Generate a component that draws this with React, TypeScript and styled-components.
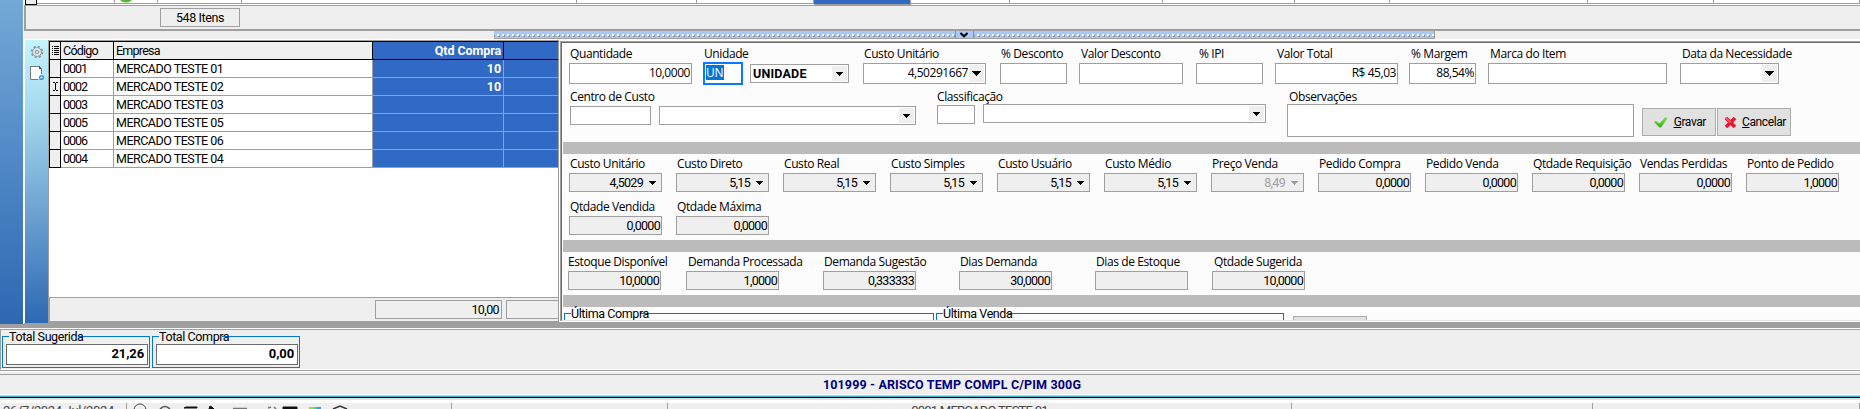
import React from 'react';
import styled, { createGlobalStyle } from 'styled-components';

const GlobalStyle = createGlobalStyle`
  * {
    box-sizing: border-box;
  }
  body {
    margin: 0;
    overflow: hidden;
    background: #efefef;
  }
`;
const bitmapFont = "Roboto, 'Liberation Sans', sans-serif";
const labelFont = "'Open Sans', 'Noto Sans', sans-serif";

const Screen = styled.div`
  display: flex;
  flex-direction: column;
  width: 1860px;
  height: 409px;
  overflow: hidden;
  background: #efefef;
  color: #000;
  font-family: ${bitmapFont};
  font-size: 12px;
  letter-spacing: -0.35px;
  white-space: nowrap;
`;
const Main = styled.div`
  display: flex;
  height: 328px;
  flex-shrink: 0;
  background: #9f9f9f;
`;
const Rail = styled.div`
  width: 24px;
  height: 324px;
  border-right: 1px solid #fff;
  background: linear-gradient(#72a9d7, #2d68b3);
`;
const Content = styled.div`
  width: 1836px;
  display: flex;
  flex-direction: column;
`;

/* items grid, only its last line is visible */
const ItemsEdge = styled.div`
  display: flex;
  height: 6px;
  padding-left: 1px;
  background: #fff;
  border-bottom: 1px solid #9f9f9f;
`;
const ItemsIndicator = styled.div`
  width: 12px;
  height: 5px;
  border: solid #000;
  border-width: 0 1px 1px 1px;
  background: #efefef;
`;
const ItemsCell = styled.div<{ w: number; selected?: boolean }>`
  width: ${(p) => p.w}px;
  height: ${(p) => (p.selected ? 5 : 4)}px;
  border-right: 1px solid #9f9f9f;
  border-bottom: 1px solid #9f9f9f;
  background: ${(p) => (p.selected ? '#316ac5' : '#fff')};
  display: flex;
  padding-left: 5px;
`;
const ItemsFooter = styled.div`
  height: 25px;
  border-left: 2px solid #9f9f9f;
  border-bottom: 2px solid #9f9f9f;
  background: #efefef;
  padding: 2px 0 0 134px;
`;
const ItemsCount = styled.div`
  width: 80px;
  height: 19px;
  border: 1px solid #9f9f9f;
  line-height: 18px;
  text-align: center;
  font-size: 12.5px;
  letter-spacing: -0.4px;
`;
const SplitterLine = styled.div`
  display: flex;
  height: 9px;
  padding-left: 470px;
  background: #efefef;
  border-bottom: 1px solid #fff;
`;
const Dots = styled.div`
  flex: 1;
  background: repeating-linear-gradient(90deg, transparent 0 3px, #fff 3px 5px) 0 3px / 100% 2px
      no-repeat,
    repeating-linear-gradient(90deg, #8e9296 0 1px, transparent 1px 4px, #8e9296 4px 5px) 0 4px /
      100% 2px no-repeat,
    #a9c9f3;
`;
const Splitter = styled.div`
  display: flex;
  width: 941px;
  height: 8px;
  border: solid #9f9f9f;
  border-width: 0 1px 1px 0;
  background: #a9c9f3;
`;
const SplitterButton = styled.div`
  width: 19px;
  border: solid #8e9296;
  border-width: 0 1px 0 1px;
  display: flex;
  justify-content: center;
`;

const Lower = styled.div`
  display: flex;
  height: 288px;
`;
const Toolbar = styled.div`
  width: 24px;
  height: 283px;
  border-left: 1px solid #fff;
  background: linear-gradient(#c3f5ff, #a5d9ee 25%, #2d68b3);
  display: flex;
  flex-direction: column;
  align-items: center;
  gap: 6px;
  padding-top: 5px;
`;
const GridPanel = styled.div`
  width: 510px;
  height: 281px;
  display: flex;
  flex-direction: column;
  border: solid #9f9f9f;
  border-width: 1px 0 0 1px;
  background: #fff;
  overflow: hidden;
`;
const GridRow = styled.div<{ head?: boolean }>`
  display: flex;
  flex-shrink: 0;
  height: ${(p) => (p.head ? 19 : 18)}px;
  border-top: ${(p) => (p.head ? '1px solid #000' : '0')};
`;
const Cell = styled.div<{ w: number; head?: boolean; blue?: boolean; digits?: boolean }>`
  width: ${(p) => p.w}px;
  flex-shrink: 0;
  padding: 0 2px;
  line-height: 17px;
  border: solid ${(p) => (p.head ? '#000' : '#9f9f9f')};
  border-width: 0 1px 1px 0;
  background: ${(p) => (p.blue ? '#316ac5' : p.head ? '#efefef' : '#fff')};
  color: ${(p) => (p.blue ? '#fff' : '#000')};
  font-size: 12.5px;
  font-weight: ${(p) => (p.blue ? 700 : 400)};
  text-align: ${(p) => (p.blue ? 'right' : 'left')};
  letter-spacing: ${(p) => (p.digits ? '-1px' : p.blue ? '-0.1px' : p.head ? '-0.75px' : '-0.5px')};
`;
const Indicator = styled.div`
  width: 12px;
  flex-shrink: 0;
  border: solid #000;
  border-width: 0 1px 1px 1px;
  background: #efefef;
  display: flex;
  align-items: center;
  justify-content: center;
`;
const GridFooter = styled.div`
  margin-top: auto;
  height: 24px;
  border: solid #9f9f9f;
  border-width: 1px 0 0 1px;
  background: #efefef;
  display: flex;
  gap: 4px;
  padding: 2px 0 0 325px;
`;
const FooterBox = styled.div`
  width: 127px;
  flex-shrink: 0;
  height: 19px;
  border: 1px solid #9f9f9f;
  text-align: right;
  line-height: 18px;
  font-size: 12.5px;
  padding-right: 2px;
  letter-spacing: -0.6px;
`;

const FormPanel = styled.div`
  width: 1302px;
  height: 282px;
  border: solid #9f9f9f;
  border-width: 0 0 0 1px;
  background: #fff;
  padding: 1px 0 1px 1px;
`;
const FormBody = styled.div`
  height: 280px;
  border: solid #9f9f9f;
  border-width: 1px 0 0 1px;
`;
const FormInner = styled.div`
  height: 279px;
  border: solid #6b6b6b;
  border-width: 1px 0 0 1px;
  border-bottom: 1px solid #e1e1e1;
  background: #fcfcfc;
  overflow: hidden;
`;
const Line = styled.div<{ top: number; h: number; left: number }>`
  display: flex;
  align-items: flex-start;
  height: ${(p) => p.h}px;
  padding: ${(p) => p.top}px 0 0 ${(p) => p.left}px;
`;
const Divider = styled.div`
  height: 12px;
  margin-left: 1px;
  background: #bbb;
`;
const FieldWrap = styled.div<{ w: number; gap: number }>`
  width: ${(p) => p.w}px;
  margin-left: ${(p) => p.gap}px;
  flex-shrink: 0;
`;
const Label = styled.div<{ indent: number }>`
  height: 18px;
  line-height: 18px;
  padding-left: ${(p) => p.indent}px;
  font-family: ${labelFont};
  font-size: 12px;
  letter-spacing: -0.4px;
`;
const Controls = styled.div`
  display: flex;
`;
const Input = styled.div<{
  w: number;
  h?: number;
  readOnly?: boolean;
  humanist?: boolean;
  disabled?: boolean;
  lift?: number;
  gap?: number;
  bold?: boolean;
}>`
  display: flex;
  justify-content: ${(p) => (p.bold ? 'space-between' : 'flex-end')};
  width: ${(p) => p.w}px;
  height: ${(p) => p.h || 19}px;
  flex-shrink: 0;
  margin-top: ${(p) => -(p.lift || 0)}px;
  margin-left: ${(p) => p.gap || 0}px;
  padding: 0 1px 0 2px;
  border: 1px solid #9f9f9f;
  background: ${(p) => (p.readOnly ? '#efefef' : '#fff')};
  color: ${(p) => (p.disabled ? '#9f9f9f' : '#000')};
  font-family: ${(p) => (p.humanist ? labelFont : bitmapFont)};
  font-size: ${(p) => (p.humanist ? '12px' : '12.5px')};
  font-weight: ${(p) => (p.bold ? 700 : 400)};
  line-height: ${(p) => (p.humanist ? 18 : 17)}px;
  letter-spacing: ${(p) => (p.bold ? '0.2px' : p.humanist ? '-0.45px' : '-0.7px')};
`;
const FocusInput = styled.div`
  width: 40px;
  height: 23px;
  margin-top: -1px;
  border: 2px solid #0a78ff;
  background: #fff;
  padding: 1px;
`;
const SelectedText = styled.div`
  width: 18px;
  height: 15px;
  background: #0078d7;
  color: #fff;
  font-family: ${labelFont};
  line-height: 15px;
`;
const DropBox = styled.div<{ flat?: boolean }>`
  width: ${(p) => (p.flat ? 17 : 15)}px;
  margin: 1px ${(p) => (p.flat ? -1 : 0)}px 1px 1px;
  background: #efefef;
  display: flex;
  align-items: center;
  justify-content: center;
`;
const Memo = styled.div`
  width: 347px;
  height: 33px;
  margin-top: -2px;
  border: 1px solid #9f9f9f;
  background: #fff;
`;
const Button = styled.div<{ gap: number }>`
  width: 74px;
  height: 28px;
  flex-shrink: 0;
  margin: 20px 0 0 ${(p) => p.gap}px;
  border: 1px solid #adadad;
  background: #e1e1e1;
  display: flex;
  align-items: center;
  justify-content: space-between;
  padding: 0 ${(p) => (p.gap > 1 ? 9 : 4)}px 0 ${(p) => (p.gap > 1 ? 11 : 6)}px;
  letter-spacing: -0.4px;
`;
const ButtonEdge = styled.div`
  width: 74px;
  height: 10px;
  margin: 3px 0 0 9px;
  border: 1px solid #adadad;
  background: #e1e1e1;
`;
const Group = styled.div<{ w: number; h: number; gap?: number }>`
  position: relative;
  width: ${(p) => p.w}px;
  height: ${(p) => p.h}px;
  flex-shrink: 0;
  margin-left: ${(p) => p.gap || 0}px;
  border: 1px solid #0078d7;
`;
const Legend = styled.span<{ bg: string; w: number }>`
  position: absolute;
  left: 6px;
  top: -7px;
  width: ${(p) => p.w}px;
  height: 13px;
  line-height: 14px;
  font-size: 12.5px;
  letter-spacing: -0.4px;
  background: ${(p) => p.bg};
`;

const Totals = styled.div`
  display: flex;
  flex-shrink: 0;
  height: 41px;
  margin-top: 1px;
  padding: 6px 0 0 1px;
  border-left: 1px solid #9f9f9f;
  border-top: 1px solid #9f9f9f;
  box-shadow: 0 -1px 0 #fff;
  border-bottom: 1px solid #fff;
`;
const TotalInput = styled.div`
  height: 21px;
  margin: 7px 1px 0 3px;
  border: 1px solid #6b6b6b;
  background: #fff;
  text-align: right;
  line-height: 18px;
  padding-right: 3px;
  font-size: 13px;
  font-weight: 700;
  letter-spacing: -0.1px;
`;
const ProductBar = styled.div`
  flex-shrink: 0;
  margin-top: 1px;
  height: 24px;
  border-top: 1px solid #fff;
  box-shadow: 0 -1px 0 #9f9f9f;
  border-bottom: 1px solid #fff;
  padding-top: 2px;
`;
const ProductName = styled.div`
  height: 20px;
  border-top: 1px solid #9f9f9f;
  padding-left: 44px;
  text-align: center;
  line-height: 20px;
  color: #000080;
  font-size: 12.5px;
  font-weight: 700;
  letter-spacing: 0.15px;
`;
const WindowEdge = styled.div`
  flex-shrink: 0;
  height: 8px;
  background: linear-gradient(
    #a7d9ee 0 1px,
    #35b4d4 1px 2px,
    #000 2px 3px,
    #dfdfdf 3px 5px,
    #fff 5px
  );
`;
const StatusBar = styled.div`
  display: flex;
  flex-shrink: 0;
  height: 6px;
  overflow: hidden;
  svg {
    display: block;
    margin-top: -1px;
  }
`;
const StatusPane = styled.div<{ w: number; tight?: boolean }>`
  width: ${(p) => p.w}px;
  flex-shrink: 0;
  height: 6px;
  border-right: 1px solid #9f9f9f;
  color: #444;
  text-align: ${(p) => (p.tight ? 'center' : 'left')};
  font-size: 13px;
  line-height: 14px;
  letter-spacing: ${(p) => (p.tight ? '-0.75px' : '-0.35px')};
  padding: 1px 0 0 ${(p) => (p.tight ? 0 : 3)}px;
  overflow: hidden;
`;

const Arrow = ({ wide, color = '#000' }: { wide?: boolean; color?: string }) => (
  <svg width={wide ? 9 : 7} height={wide ? 5 : 4} viewBox={wide ? '0 0 9 5' : '0 0 7 4'} shapeRendering="crispEdges">
    <path d={wide ? 'M0 0h9L4.5 5z' : 'M0 0h7L3.5 4z'} fill={color} />
  </svg>
);
const GearIcon = () => (
  <svg width="14" height="14" viewBox="0 0 14 14">
    <circle cx="7" cy="7" r="5.3" fill="none" stroke="#8f999d" strokeWidth="2" strokeDasharray="2.3 1.85" />
    <circle cx="7" cy="7" r="4.4" fill="#e5edef" stroke="#949da1" />
    <circle cx="7" cy="7" r="1.8" fill="#c3ecf6" stroke="#858e92" />
  </svg>
);
const PageIcon = () => (
  <svg width="14" height="16" viewBox="0 0 14 16">
    <path d="M.5 1.5h9l2 2.5v10.5h-11z" fill="#fff" />
    <path d="M.5 1v13.5h8M1 1.5h8.5M11.5 4v5" fill="none" stroke="#77797a" />
    <path d="M9 .5v3.5h3z" fill="#555" />
    <circle cx="11.5" cy="12.5" r="1.8" fill="#fff" stroke="#3a91d6" strokeWidth="1.5" />
  </svg>
);
const ListIcon = () => (
  <svg width="7" height="9" viewBox="0 0 7 9" shapeRendering="crispEdges">
    <path d="M0 0h1v1H0zM2 0h5v1H2zM0 2h1v1H0zM2 2h5v1H2zM0 4h1v1H0zM2 4h5v1H2zM0 6h1v1H0zM2 6h5v1H2zM0 8h1v1H0zM2 8h5v1H2z" />
  </svg>
);
const CursorIcon = () => (
  <svg width="5" height="9" viewBox="0 0 5 9" shapeRendering="crispEdges">
    <path d="M0 0h2v1H0zM3 0h2v1H3zM2 1h1v7H2zM0 8h2v1H0zM3 8h2v1H3z" />
  </svg>
);
const CheckIcon = () => (
  <svg width="14" height="11" viewBox="0 0 14 11">
    <defs>
      <linearGradient id="ok" x1="0" y1="0" x2="0" y2="1">
        <stop offset="0" stopColor="#7be05a" />
        <stop offset="1" stopColor="#32ae1c" />
      </linearGradient>
    </defs>
    <path d="M0 5l2-1 3.5 2.5L11.5 0l2 1.5L7 10.5H5.5z" fill="url(#ok)" />
  </svg>
);
const CrossIcon = () => (
  <svg width="13" height="13" viewBox="0 0 13 13">
    <path d="M2 2l9 9M11 2l-9 9" stroke="#e01c33" strokeWidth="3.8" />
    <path d="M1.5 1.5l5 5" stroke="#f65868" strokeWidth="2" />
  </svg>
);
const TrayIcons = () => (
  <svg width="226" height="6" viewBox="130 403 226 6">
    <circle cx="140" cy="410" r="6" fill="none" stroke="#444" />
    <circle cx="165" cy="412" r="5.5" fill="none" stroke="#555" strokeWidth="1.5" />
    <path d="M184 408h13v-1h-11zM209 409l1-3 2 1 2 2zM283 407h14v2h-14z" fill="#111" stroke="#111" />
    <path d="M233 408.5h14M268 408l3-1M274 407l2 2" stroke="#777" strokeWidth="1.5" />
    <path d="M309 408h5" stroke="#a5dc28" strokeWidth="2" />
    <path d="M314 408h3" stroke="#25d8b0" strokeWidth="2" />
    <path d="M317 408h4" stroke="#4f91dc" strokeWidth="2" />
    <path d="M333 409l7-3 7 3" fill="none" stroke="#333" strokeWidth="1.5" />
  </svg>
);

type FieldProps = {
  label: string;
  value?: string;
  w: number;
  gap?: number;
  indent?: number;
  top?: boolean;
  drop?: boolean;
  disabled?: boolean;
};

function Field({ label, value, w, gap = 0, indent = 1, top, drop, disabled }: FieldProps) {
  return (
    <FieldWrap w={w} gap={gap}>
      <Label indent={indent}>{label}</Label>
      <Input w={w} h={top ? 21 : 19} readOnly={!top} humanist={top} disabled={disabled}>
        {value}
        {drop && (
          <DropBox flat={!top}>
            <Arrow wide={top} color={disabled ? '#9f9f9f' : '#000'} />
          </DropBox>
        )}
      </Input>
    </FieldWrap>
  );
}

const companies = [
  { code: '0001', name: 'MERCADO TESTE 01', qty: '10' },
  { code: '0002', name: 'MERCADO TESTE 02', qty: '10', active: true },
  { code: '0003', name: 'MERCADO TESTE 03' },
  { code: '0005', name: 'MERCADO TESTE 05' },
  { code: '0006', name: 'MERCADO TESTE 06' },
  { code: '0004', name: 'MERCADO TESTE 04' },
];
const costs: FieldProps[] = [
  { label: 'Custo Unitário', value: '4,5029', w: 93, drop: true },
  { label: 'Custo Direto', value: '5,15', w: 93, drop: true },
  { label: 'Custo Real', value: '5,15', w: 93, drop: true },
  { label: 'Custo Simples', value: '5,15', w: 93, drop: true },
  { label: 'Custo Usuário', value: '5,15', w: 93, drop: true },
  { label: 'Custo Médio', value: '5,15', w: 93, drop: true },
  { label: 'Preço Venda', value: '8,49', w: 93, drop: true, disabled: true },
  { label: 'Pedido Compra', value: '0,0000', w: 93 },
  { label: 'Pedido Venda', value: '0,0000', w: 93 },
  { label: 'Qtdade Requisição', value: '0,0000', w: 93 },
  { label: 'Vendas Perdidas', value: '0,0000', w: 93 },
  { label: 'Ponto de Pedido', value: '1,0000', w: 93 },
];
const itemColumns = [78, 43, 84, 335, 120, 117, 97, 99, 153, 132, 95, 198, 126, 146];

function CompanyGrid() {
  return (
    <GridPanel>
      <GridRow head>
        <Indicator><ListIcon /></Indicator>
        <Cell w={53} head>Código</Cell>
        <Cell w={259} head>Empresa</Cell>
        <Cell w={131} head blue>Qtd Compra</Cell>
        <Cell w={131} head blue />
      </GridRow>
      {companies.map((c) => (
        <GridRow key={c.code}>
          <Indicator>{c.active && <CursorIcon />}</Indicator>
          <Cell w={53} digits>{c.code}</Cell>
          <Cell w={259}>{c.name}</Cell>
          <Cell w={131} blue>{c.qty}</Cell>
          <Cell w={131} blue />
        </GridRow>
      ))}
      <GridFooter>
        <FooterBox>10,00</FooterBox>
        <FooterBox />
      </GridFooter>
    </GridPanel>
  );
}

function ItemForm() {
  return (
    <FormPanel>
      <FormBody>
        <FormInner>
          <Line top={2} h={43} left={7}>
            <Field top label="Quantidade" value="10,0000" w={123} />
            <FieldWrap w={146} gap={11}>
              <Label indent={1}>Unidade</Label>
              <Controls>
                <FocusInput><SelectedText>UN</SelectedText></FocusInput>
                <Input w={99} bold lift={-1} gap={7}>
                  UNIDADE
                  <DropBox><Arrow /></DropBox>
                </Input>
              </Controls>
            </FieldWrap>
            <Field top drop label="Custo Unitário" value="4,50291667" w={123} gap={14} />
            <Field top label="% Desconto" w={67} gap={14} />
            <Field top label="Valor Desconto" w={104} gap={12} indent={2} />
            <Field top label="% IPI" w={67} gap={13} indent={3} />
            <Field top label="Valor Total" value="R$ 45,03" w={123} gap={12} indent={2} />
            <Field top label="% Margem" value="88,54%" w={67} gap={11} indent={2} />
            <Field top label="Marca do Item" w={179} gap={12} indent={2} />
            <Field top drop label="Data da Necessidade" w={99} gap={13} indent={2} />
          </Line>
          <Line top={2} h={56} left={8}>
            <FieldWrap w={346} gap={0}>
              <Label indent={0}>Centro de Custo</Label>
              <Controls>
                <Input w={81} />
                <Input w={257} gap={8}>
                  <DropBox><Arrow /></DropBox>
                </Input>
              </Controls>
            </FieldWrap>
            <FieldWrap w={329} gap={21}>
              <Label indent={0}>Classificação</Label>
              <Controls>
                <Input w={38} lift={1} />
                <Input w={283} lift={2} gap={8}>
                  <DropBox><Arrow /></DropBox>
                </Input>
              </Controls>
            </FieldWrap>
            <FieldWrap w={347} gap={21}>
              <Label indent={2}>Observações</Label>
              <Memo />
            </FieldWrap>
            <Button gap={8}>
              <CheckIcon />
              <span><u>G</u>ravar</span>
            </Button>
            <Button gap={1}>
              <CrossIcon />
              <span><u>C</u>ancelar</span>
            </Button>
          </Line>
          <Divider />
          <Line top={1} h={43} left={7}>
            {costs.map((f, i) => (
              <Field key={f.label} {...f} gap={i ? 14 : 0} />
            ))}
          </Line>
          <Line top={1} h={43} left={7}>
            <Field label="Qtdade Vendida" value="0,0000" w={93} />
            <Field label="Qtdade Máxima" value="0,0000" w={93} gap={14} />
          </Line>
          <Divider />
          <Line top={1} h={43} left={6}>
            <Field label="Estoque Disponível" value="10,0000" w={93} indent={0} />
            <Field label="Demanda Processada" value="1,0000" w={93} gap={25} indent={2} />
            <Field label="Demanda Sugestão" value="0,333333" w={93} gap={44} />
            <Field label="Dias Demanda" value="30,0000" w={93} gap={43} />
            <Field label="Dias de Estoque" w={93} gap={43} />
            <Field label="Qtdade Sugerida" value="10,0000" w={93} gap={24} indent={2} />
          </Line>
          <Divider />
          <Line top={6} h={13} left={2}>
            <Group w={370} h={20}>
              <Legend bg="#fcfcfc" w={69}>Última Compra</Legend>
            </Group>
            <Group w={348} h={20} gap={2}>
              <Legend bg="#fcfcfc" w={63}>Última Venda</Legend>
            </Group>
            <ButtonEdge />
          </Line>
        </FormInner>
      </FormBody>
    </FormPanel>
  );
}

function App() {
  return (
    <Screen>
      <GlobalStyle />
      <Main>
        <Rail />
        <Content>
          <ItemsEdge>
            <ItemsIndicator />
            {itemColumns.map((w, i) => (
              <ItemsCell key={i} w={w} selected={i === 6}>
                {i === 1 && (
                  <svg width="12" height="3" viewBox="0 0 12 3">
                    <ellipse cx="6" cy="-1" rx="6" ry="3.5" fill="#5cb531" />
                  </svg>
                )}
              </ItemsCell>
            ))}
          </ItemsEdge>
          <ItemsFooter>
            <ItemsCount>548 Itens</ItemsCount>
          </ItemsFooter>
          <SplitterLine>
            <Splitter>
              <Dots />
              <SplitterButton>
                <svg width="8" height="7" viewBox="0 0 8 7">
                  <path d="M.5 2L4 5.3 7.5 2" fill="none" stroke="#000" strokeWidth="2" />
                </svg>
              </SplitterButton>
              <Dots />
            </Splitter>
          </SplitterLine>
          <Lower>
            <Toolbar>
              <GearIcon />
              <PageIcon />
            </Toolbar>
            <CompanyGrid />
            <ItemForm />
          </Lower>
        </Content>
      </Main>
      <Totals>
        <Group w={148} h={32}>
          <Legend bg="#efefef" w={69}>Total Sugerida</Legend>
          <TotalInput>21,26</TotalInput>
        </Group>
        <Group w={148} h={32} gap={2}>
          <Legend bg="#efefef" w={63}>Total Compra</Legend>
          <TotalInput>0,00</TotalInput>
        </Group>
      </Totals>
      <ProductBar>
        <ProductName>101999 - ARISCO TEMP COMPL C/PIM 300G</ProductName>
      </ProductBar>
      <WindowEdge />
      <StatusBar>
        <StatusPane w={127}>26/7/2024 Jul/2024</StatusPane>
        <StatusPane w={325}><TrayIcons /></StatusPane>
        <StatusPane w={216} />
        <StatusPane w={624} tight>0001 MERCADO TESTE 01</StatusPane>
        <StatusPane w={301} />
        <StatusPane w={267} />
      </StatusBar>
    </Screen>
  );
}
export default App;
